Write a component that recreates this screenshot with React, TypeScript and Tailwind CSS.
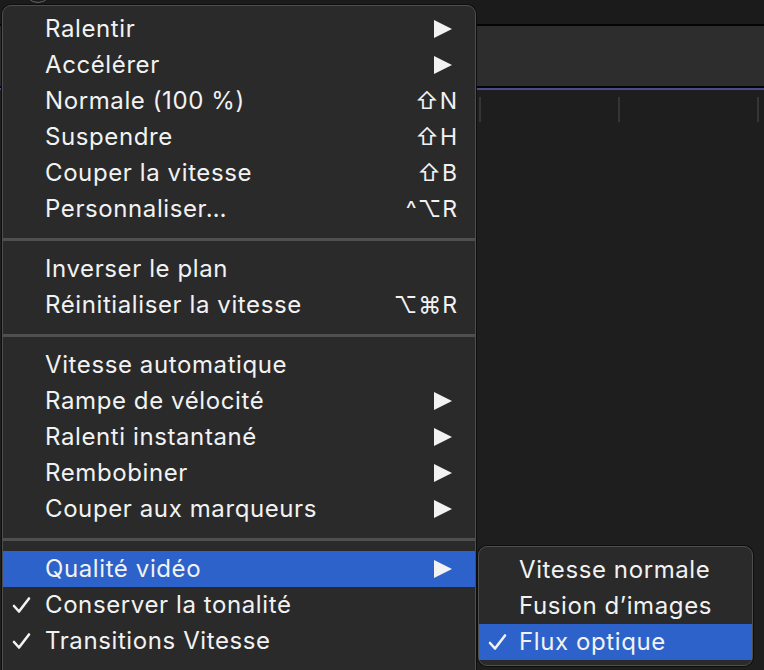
import React from 'react';

type Item = { label: string; shortcut?: string; arrow?: boolean; checked?: boolean; active?: boolean };

const sections: Item[][] = [
  [
    { label: 'Ralentir', arrow: true },
    { label: 'Accélérer', arrow: true },
    { label: 'Normale (100 %)', shortcut: '⇧N' },
    { label: 'Suspendre', shortcut: '⇧H' },
    { label: 'Couper la vitesse', shortcut: '⇧B' },
    { label: 'Personnaliser…', shortcut: '^⌥R' },
  ],
  [
    { label: 'Inverser le plan' },
    { label: 'Réinitialiser la vitesse', shortcut: '⌥⌘R' },
  ],
  [
    { label: 'Vitesse automatique' },
    { label: 'Rampe de vélocité', arrow: true },
    { label: 'Ralenti instantané', arrow: true },
    { label: 'Rembobiner', arrow: true },
    { label: 'Couper aux marqueurs', arrow: true },
  ],
  [
    { label: 'Qualité vidéo', arrow: true, active: true },
    { label: 'Conserver la tonalité', checked: true },
    { label: 'Transitions Vitesse', checked: true },
  ],
];

const subItems: Item[] = [
  { label: 'Vitesse normale' },
  { label: 'Fusion d’images' },
  { label: 'Flux optique', checked: true, active: true },
];

const Check = () => (
  <svg width="19" height="18" viewBox="0 0 19 18" className="absolute left-[9px] top-[9px]">
    <path d="M2 10 L7 15.5 L17 2.5" fill="none" stroke="#f2f2f2" strokeWidth="2.6" strokeLinecap="round" strokeLinejoin="round" />
  </svg>
);

const Arrow = () => (
  <svg width="18" height="18" viewBox="0 0 18 18" className="ml-auto mr-[6px]">
    <polygon points="0,0 18,9 0,18" fill="#f2f2f2" />
  </svg>
);

const Row = ({ item, pl }: { item: Item; pl: string }) => (
  <div className={`relative flex h-[36px] items-center ${pl} pr-[17px] ${item.active ? 'bg-[#2c62c9]' : ''}`}>
    {item.checked && <Check />}
    <span className="tracking-[0.6px]">{item.label}</span>
    {item.arrow && <Arrow />}
    {item.shortcut && <span className="ml-auto text-[23px] tracking-[1px]">{item.shortcut}</span>}
  </div>
);

export default function App() {
  return (
    <div
      className="relative h-[670px] w-[764px] overflow-hidden bg-[#1e1e1e] text-[24px] text-[#f2f2f2]"
      style={{ fontFamily: "Inter, 'DejaVu Sans', sans-serif" }}
    >
      {/* window background */}
      <div className="h-[24px] bg-[#1b1b1b]" />
      <div className="h-[2px] bg-[#050505]" />
      <div className="h-[60px] bg-[#2d2d2d]" />
      <div className="h-[2px] bg-[#050505]" />
      <div className="h-[2px] bg-[#4b4a8c]" />
      <div className="flex gap-[137px] pl-[479px] pt-[7px]">
        <div className="h-[25px] w-[2px] bg-[#353535]" />
        <div className="h-[25px] w-[2px] bg-[#353535]" />
        <div className="h-[25px] w-[2px] bg-[#353535]" />
      </div>
      <div className="absolute left-[24px] top-[-25px] h-[28px] w-[28px] rounded-full border border-[#666]" />

      {/* main menu */}
      <div className="absolute left-[2px] top-[5px] w-[474px] rounded-[9px] border border-[#4e4e4e] bg-[#2a2a2a] pt-[5px] shadow-[0_0_0_1px_#0e0e0e]">
        {sections.map((sec, i) => (
          <div key={i}>
            {i > 0 && (
              <div className="flex h-[24px] items-center">
                <div className="h-[3px] w-full bg-[#4f4f4f]" />
              </div>
            )}
            {sec.map((item) => (
              <Row key={item.label} item={item} pl="pl-[42px]" />
            ))}
          </div>
        ))}
        <div className="h-[20px]" />
      </div>

      {/* submenu */}
      <div className="absolute left-[478px] top-[546px] w-[275px] rounded-[9px] border border-[#4e4e4e] bg-[#2a2a2a] py-[5px] shadow-[0_0_0_1px_#0e0e0e]">
        {subItems.map((item) => (
          <Row key={item.label} item={item} pl="pl-[40px]" />
        ))}
      </div>
    </div>
  );
}
